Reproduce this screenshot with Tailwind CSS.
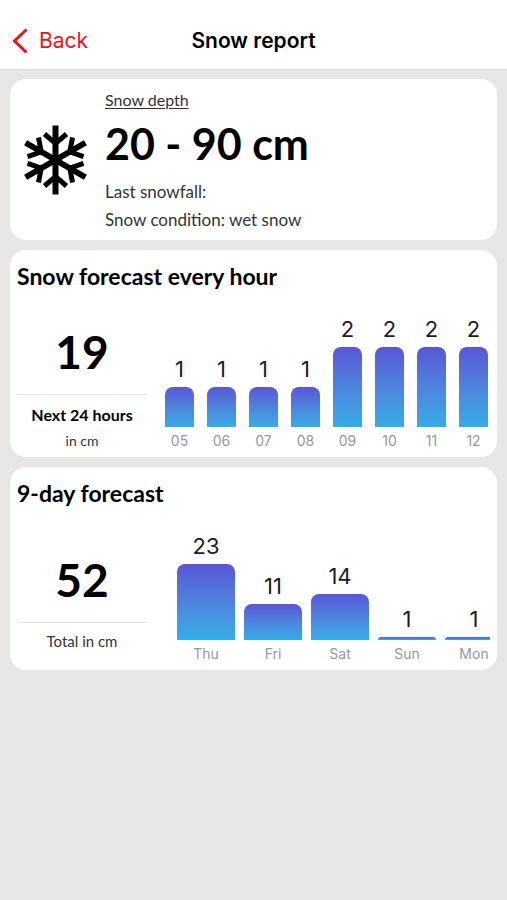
<!DOCTYPE html>
<html lang="en">
<head>
  <meta charset="UTF-8" />
  <meta name="viewport" content="width=device-width, initial-scale=1.0" />
  <title>Snow report</title>
  <script src="https://cdn.jsdelivr.net/npm/@tailwindcss/browser@4"></script>
</head>

<body class="min-h-screen bg-[#e8e7e5] text-black font-['Lato',sans-serif]">

  <!-- Navbar -->
  <header class="grid grid-cols-3 items-end h-[70px] px-3 pb-3 bg-white border-b border-[#dcdbda] font-['Inter',sans-serif]">
    <a href="#" class="flex items-center gap-3 text-[21px] leading-8 text-[#e8141c]">
      <svg class="w-[15px] h-[26px]" viewBox="0 0 15 26" fill="none" stroke="currentColor" stroke-width="3" aria-hidden="true">
        <path d="M14.500 1.500 2.500 13 14.500 24.500" />
      </svg>
      Back
    </a>
    <h1 class="text-[21px] leading-8 font-semibold text-center whitespace-nowrap">Snow report</h1>
  </header>

  <main class="flex flex-col gap-[10px] px-[10px] pt-[9px]">

    <!-- Snow depth -->
    <section class="flex items-center gap-[17px] h-[161px] pl-[13px] pr-2 bg-white rounded-2xl">
      <svg class="w-[65px] h-[70px] shrink-0" viewBox="-32 -35 64 70" fill="none" stroke="currentColor" aria-hidden="true">
        <defs>
          <g id="arm">
            <path d="M0 0V-34.5" stroke-width="6" />
            <path d="M-11-26 0-16.500 11-26" stroke-width="5" />
          </g>
        </defs>
        <use href="#arm" />
        <use href="#arm" transform="rotate(60)" />
        <use href="#arm" transform="rotate(120)" />
        <use href="#arm" transform="rotate(180)" />
        <use href="#arm" transform="rotate(240)" />
        <use href="#arm" transform="rotate(300)" />
      </svg>
      <div class="text-[17px] leading-7 text-[#333]">
        <h2 class="text-[16px] underline underline-offset-2">Snow depth</h2>
        <p class="pt-0.5 pb-1.5 text-[43px] leading-14 font-bold text-black">20 - 90 cm</p>
        <p>Last snowfall:</p>
        <p>Snow condition: wet snow</p>
      </div>
    </section>

    <!-- Hourly forecast -->
    <section class="px-[7px] pt-[10px] pb-1.5 bg-white rounded-2xl">
      <h2 class="text-[23px] leading-8 font-bold">Snow forecast every hour</h2>
      <div class="flex items-end gap-[18px]">
        <div class="w-[130px] shrink-0 text-center">
          <p class="pb-3.5 text-[46px] leading-14 font-bold">19</p>
          <p class="pt-2 border-t border-[#e3e3e3] text-[16px] leading-6 font-bold">Next 24 hours</p>
          <p class="pt-1 text-[14px] leading-5 text-[#333]">in cm</p>
        </div>
        <ul id="hours" class="flex flex-1 items-end gap-[13px] h-[159px] overflow-hidden font-['Inter',sans-serif]"></ul>
      </div>
    </section>

    <!-- 9-day forecast -->
    <section class="px-[7px] pt-[10px] pb-1.5 bg-white rounded-2xl">
      <h2 class="text-[23px] leading-8 font-bold">9-day forecast</h2>
      <div class="flex items-end gap-[30px]">
        <div class="w-[130px] shrink-0 pb-[11px] text-center">
          <p class="pb-3.5 text-[46px] leading-14 font-bold">52</p>
          <p class="pt-1.5 border-t border-[#e3e3e3] text-[15px] leading-6 text-[#333]">Total in cm</p>
        </div>
        <ul id="days" class="flex flex-1 items-end gap-[9px] h-[155px] overflow-hidden font-['Inter',sans-serif]"></ul>
      </div>
    </section>

  </main>

  <script>
    const hours = [['05', 1], ['06', 1], ['07', 1], ['08', 1], ['09', 2], ['10', 2], ['11', 2], ['12', 2]];
    const days = [['Thu', 23, 76], ['Fri', 11, 36], ['Sat', 14, 46], ['Sun', 1, 3], ['Mon', 1, 3]];

    const bar = (label, value, height, width) => `
      <li class="${width} shrink-0 text-center">
        <p class="pb-1 text-[22px] leading-7 text-[#1c1c1e]">${value}</p>
        <div class="rounded-t-lg bg-linear-to-b from-[#5856d6] to-[#32ade6]" style="height: ${height}px"></div>
        <p class="pt-1 text-[14px] leading-5 text-[#98989c]">${label}</p>
      </li>`;

    document.getElementById('hours').innerHTML =
      hours.map(([label, cm]) => bar(label, cm, cm * 40, 'w-[29px]')).join('');
    document.getElementById('days').innerHTML =
      days.map(([label, cm, height]) => bar(label, cm, height, 'w-[58px]')).join('');
  </script>
</body>
</html>
